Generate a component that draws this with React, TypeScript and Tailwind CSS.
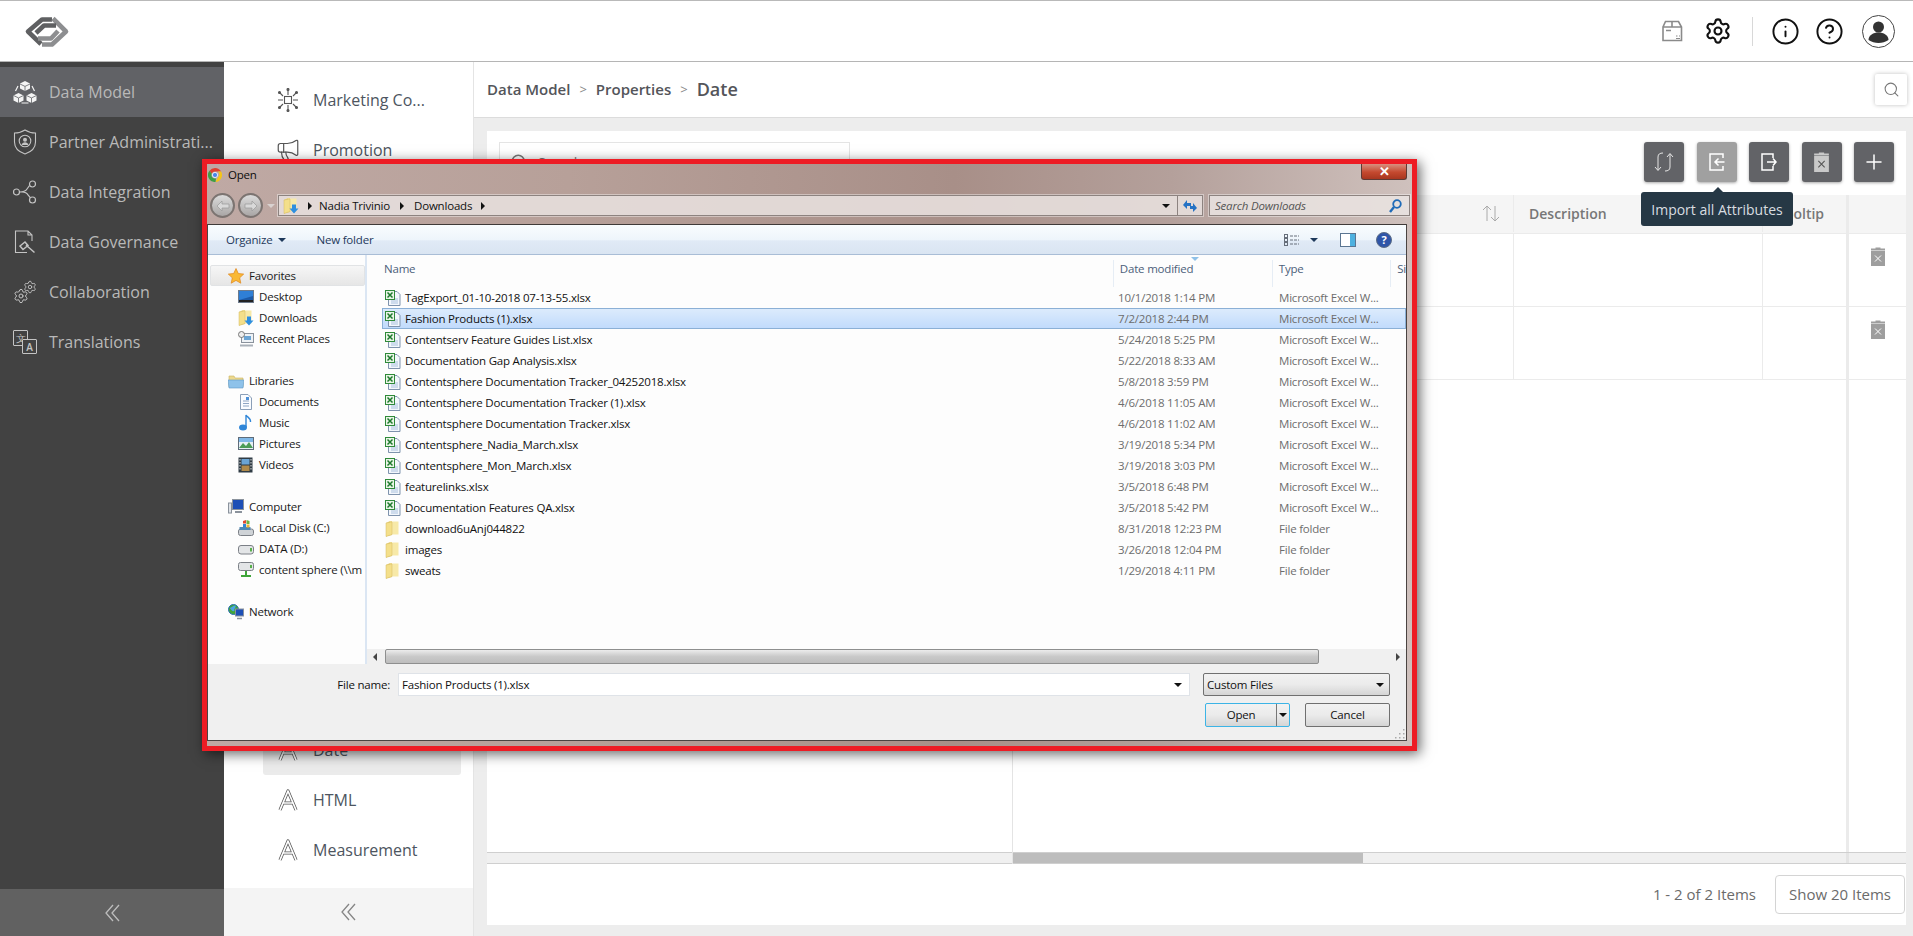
import { CircleHelp, Info, Megaphone, Plus, Search, Settings } from "lucide-react";
import type { ReactNode } from "react";

const navItems = ["Data Model", "Partner Administrati...", "Data Integration", "Data Governance", "Collaboration", "Translations"];

const files = [
  { name: "TagExport_01-10-2018 07-13-55.xlsx", date: "10/1/2018 1:14 PM" },
  { name: "Fashion Products (1).xlsx", date: "7/2/2018 2:44 PM", selected: true },
  { name: "Contentserv Feature Guides List.xlsx", date: "5/24/2018 5:25 PM" },
  { name: "Documentation Gap Analysis.xlsx", date: "5/22/2018 8:33 AM" },
  { name: "Contentsphere Documentation Tracker_04252018.xlsx", date: "5/8/2018 3:59 PM" },
  { name: "Contentsphere Documentation Tracker (1).xlsx", date: "4/6/2018 11:05 AM" },
  { name: "Contentsphere Documentation Tracker.xlsx", date: "4/6/2018 11:02 AM" },
  { name: "Contentsphere_Nadia_March.xlsx", date: "3/19/2018 5:34 PM" },
  { name: "Contentsphere_Mon_March.xlsx", date: "3/19/2018 3:03 PM" },
  { name: "featurelinks.xlsx", date: "3/5/2018 6:48 PM" },
  { name: "Documentation Features QA.xlsx", date: "3/5/2018 5:42 PM" },
  { name: "download6uAnj044822", date: "8/31/2018 12:23 PM", folder: true },
  { name: "images", date: "3/26/2018 12:04 PM", folder: true },
  { name: "sweats", date: "1/29/2018 4:11 PM", folder: true },
];

function Logo() {
  return (
    <svg width="46" height="32" viewBox="0 0 46 32" fill="none" strokeWidth="4.600" strokeLinejoin="round">
      <path d="M28 3.500H18L4 15.500 17 28" stroke="#5f6062" />
      <path d="M18 28.500H28L42 15.500 29 2.500" stroke="#8d8e90" />
      <path d="M12 17 20 9.500H32" stroke="#5f6062" />
      <path d="M14 22.500H27L34 15" stroke="#8d8e90" />
    </svg>
  );
}

function CollapseIcon({ color }: { color: string }) {
  return (
    <svg width="15" height="18" viewBox="0 0 15 18" fill="none" stroke={color} strokeWidth="1.300">
      <path d="M8 1 1 9l7 8M14 1 7 9l7 8" />
    </svg>
  );
}

function SideIcon({ index }: { index: number }) {
  const c = "#c4c4c4";
  if (index === 0) {
    return (
      <svg width="24" height="24" viewBox="0 0 24 24" fill="#f4f4f4">
        <path d="M12 1l5 2.400v5L12 11 7 8.400v-5z" />
        <path d="M5.500 13l5 2.400v5L5.500 23 .5 20.400v-5z" />
        <path d="M18.500 13l5 2.400v5l-5 2.600-5-2.600v-5z" />
        <path d="M7 4 12 6.400 17 4M12 6.400V11M.5 15.500l5 2.400 5-2.400M5.500 18v5M13.500 15.500l5 2.400 5-2.400M18.500 18v5" stroke="#616266" strokeWidth=".8" fill="none" />
        <path d="M5 6 2.500 11M19 6l2.500 5M8.500 23h7" stroke="#f4f4f4" strokeWidth="1.200" fill="none" />
      </svg>
    );
  }
  if (index === 1) {
    return (
      <svg width="24" height="26" viewBox="0 0 24 26" fill="none" stroke={c} strokeWidth="1.100">
        <path d="M12 1c3 2 6.500 3 10.500 3v9c0 6-4.500 10-10.500 12C6 23 1.500 19 1.500 13V4C5.500 4 9 3 12 1z" />
        <circle cx="12" cy="12" r="5.800" />
        <circle cx="12" cy="10.800" r="2" fill={c} stroke="none" />
        <path d="M8.500 16c.5-2 2-2.800 3.500-2.800s3 .8 3.500 2.800" fill={c} stroke="none" />
      </svg>
    );
  }
  if (index === 2) {
    return (
      <svg width="24" height="24" viewBox="0 0 24 24" fill="none" stroke={c} strokeWidth="1.200">
        <circle cx="3.500" cy="12" r="3" />
        <circle cx="19.500" cy="4" r="3" />
        <circle cx="19.500" cy="20" r="3" />
        <path d="M6.500 12c3.500 0 6-.5 7.500-3l2.500-3.500M9 12c3 0 5 1 6 3l2.500 2.800" />
      </svg>
    );
  }
  if (index === 3) {
    return (
      <svg width="24" height="24" viewBox="0 0 24 24" fill="none" stroke={c} strokeWidth="1.100">
        <path d="M14 22.500H2.500V1H15l4 4v6M15 1v4h4" />
        <path d="M7 16l5-4 3 3.500-5 4zM13 15l8.500 7.500" strokeWidth="1.500" />
      </svg>
    );
  }
  if (index === 4) {
    return (
      <span className="relative block h-[24px] w-[24px]">
        <Settings size={16} color={c} strokeWidth={1.500} className="absolute bottom-0 left-0" />
        <Settings size={14} color={c} strokeWidth={1.500} className="absolute top-0 right-0" />
      </span>
    );
  }
  return (
    <span className="relative block h-[24px] w-[24px] text-[10px] leading-[14px] text-[#c4c4c4]">
      <span className="absolute top-0 left-0 h-[16px] w-[15px] rounded-[1px] border border-[#c4c4c4] text-center">文</span>
      <span className="absolute right-0 bottom-0 h-[15px] w-[15px] rounded-[1px] border border-[#c4c4c4] bg-[#424242] text-center font-semibold">A</span>
    </span>
  );
}

function AttrIcon() {
  return (
    <svg width="20" height="22" viewBox="0 0 20 22" fill="none" strokeLinejoin="round">
      <path d="M2 21 10 2 18 21M5 14h10" stroke="#555" strokeWidth="3.200" />
      <path d="M2 21 10 2 18 21M5 14h10" stroke="#fff" strokeWidth="1.700" />
    </svg>
  );
}

function MarketingIcon() {
  return (
    <svg width="22" height="24" viewBox="0 0 22 24" fill="none" stroke="#555" strokeWidth="1.100">
      <rect x="7.500" y="8.500" width="7" height="7" />
      <path d="M11 2v5M11 17v5M1 12h5M16 12h5M3 5l3 3M19 5l-3 3M3 19l3-3M19 19l-3-3" />
      <circle cx="11" cy="1.500" r="1" fill="#555" />
      <circle cx="11" cy="22.500" r="1" fill="#555" />
      <circle cx="2.500" cy="4.500" r="1" fill="#555" />
      <circle cx="19.500" cy="4.500" r="1" fill="#555" />
      <circle cx="2.500" cy="19.500" r="1" fill="#555" />
      <circle cx="19.500" cy="19.500" r="1" fill="#555" />
    </svg>
  );
}

function ToolButton({ children, light }: { children: ReactNode; light?: boolean }) {
  return (
    <div className={`flex h-[40px] w-[40px] items-center justify-center rounded-[3px] shadow-[0_1px_3px_rgba(0,0,0,0.35)] ${light ? "bg-[#a0a0a0]" : "bg-[#626367]"}`}>
      {children}
    </div>
  );
}

function TrashIcon({ w, h, body, cross }: { w: number; h: number; body: string; cross: string }) {
  return (
    <svg width={w} height={h} viewBox="0 0 14 19">
      <path d="M4.500 1.500V.5h5v1H14V3H0V1.500z" fill={body} />
      <rect x="0" y="3.500" width="14" height="15.500" fill={body} />
      <path d="M4 8.500l6 6M10 8.500l-6 6" stroke={cross} strokeWidth="1" />
    </svg>
  );
}

function XlsxIcon() {
  return (
    <svg width="16" height="16" viewBox="0 0 16 16" className="shrink-0">
      <path d="M3.500 1.500H12l3 3v11H3.500z" fill="#f3f7fc" stroke="#7f93ad" />
      <path d="M6 9h7M6 11h7M6 13h7" stroke="#a9c0dc" strokeWidth="1" />
      <rect x="0.500" y="0.500" width="9" height="9" fill="#e9f5e6" stroke="#2f8a39" />
      <path d="M2.500 2.500l5 5M7.500 2.500l-5 5" stroke="#1e7a2d" strokeWidth="1.500" />
    </svg>
  );
}

function FolderIcon({ arrow }: { arrow?: boolean }) {
  return (
    <svg width="16" height="17" viewBox="0 0 16 17" className="shrink-0">
      <path d="M1 3l4-2h2v14l-6 1.500z" fill="#e8cf7a" />
      <path d="M5 1.500h8.500v13H5z" fill="#f7e9a8" />
      <path d="M1 3v13.500l6-2V2z" fill="#f4df8a" stroke="#d4bb63" strokeWidth=".5" />
      {arrow && <path d="M9 7.500h4v4h2.500L11 16.500 6.500 11.500H9z" fill="#2e8fe0" />}
    </svg>
  );
}

function Star() {
  return (
    <svg width="16" height="16" viewBox="0 0 16 16">
      <path d="M8 .5l2.300 5 5.400.6-4 3.700 1.100 5.400L8 12.400l-4.800 2.800 1.100-5.400-4-3.700 5.400-.6z" fill="#f9b935" stroke="#e0841a" strokeWidth=".7" />
    </svg>
  );
}

function PlaceIcon({ kind }: { kind: string }) {
  if (kind === "downloads") return <FolderIcon arrow />;
  if (kind === "music") {
    return (
      <svg width="16" height="17" viewBox="0 0 16 17">
        <ellipse cx="5" cy="13.500" rx="4" ry="3" fill="#2f86d8" />
        <path d="M8 13V1c1 2 5 3 4.500 7" fill="none" stroke="#2f86d8" strokeWidth="1.400" />
      </svg>
    );
  }
  if (kind === "docs") {
    return (
      <svg width="16" height="16" viewBox="0 0 16 16">
        <path d="M2.500.5H10l3.500 3.500v11.500h-11z" fill="#fafcff" stroke="#8b9fb8" />
        <path d="M5 7h6M5 9.500h6M5 12h6" stroke="#8fa6c4" />
        <rect x="8" y="3" width="3" height="3" fill="#4d8fd6" />
      </svg>
    );
  }
  if (kind === "videos") {
    return (
      <svg width="16" height="16" viewBox="0 0 16 16">
        <rect x="0.500" y="0.500" width="14" height="15" fill="#2f3b44" />
        <rect x="3.500" y="2" width="8" height="5.500" fill="#6aa4d4" />
        <rect x="3.500" y="8.500" width="8" height="5.500" fill="#b08a4a" />
        <path d="M2 2v12M13 2v12" stroke="#ddd" strokeWidth="1" strokeDasharray="1.500 1.500" />
      </svg>
    );
  }
  if (kind === "disk") {
    return (
      <svg width="16" height="12" viewBox="0 0 16 12">
        <rect x="0.500" y="2.500" width="15" height="8.500" rx="2.500" fill="#e3e5e7" stroke="#7c8087" />
        <rect x="12" y="5" width="2" height="3.500" fill="#58b04a" />
      </svg>
    );
  }
  if (kind === "net") {
    return (
      <svg width="16" height="16" viewBox="0 0 16 16">
        <rect x="0.500" y="0.500" width="15" height="8" rx="2" fill="#e3e5e7" stroke="#7c8087" />
        <rect x="12" y="3" width="2" height="3" fill="#58b04a" />
        <path d="M8 9v4M3 14h10" stroke="#3fa53a" strokeWidth="2" />
      </svg>
    );
  }
  if (kind === "desktop") {
    return (
      <svg width="16" height="13" viewBox="0 0 16 13">
        <rect x="0.500" y="0.500" width="15" height="12" fill="#1c5aa8" stroke="#6c7a8c" />
        <path d="M1 1h14v5L1 10z" fill="#2f7fd6" />
        <rect x="1" y="10" width="14" height="2" fill="#222" />
      </svg>
    );
  }
  if (kind === "recent") {
    return (
      <svg width="16" height="16" viewBox="0 0 16 16">
        <rect x="3.500" y="2.500" width="12" height="9" fill="#eef2f6" stroke="#8a929c" />
        <rect x="6" y="5" width="7" height="4" fill="#6aa4d4" />
        <circle cx="3.500" cy="3.500" r="3" fill="#eee" stroke="#777" />
        <path d="M2 14.500h13" stroke="#a9b0b8" strokeWidth="2" />
      </svg>
    );
  }
  if (kind === "libs") {
    return (
      <svg width="16" height="16" viewBox="0 0 16 16">
        <path d="M1 3h5l1 2h8v9H1z" fill="#edd98f" stroke="#c9b25e" strokeWidth=".6" />
        <path d="M0 7h16l-1 8H1z" fill="#8ec2ea" stroke="#5e98c7" strokeWidth=".6" />
      </svg>
    );
  }
  if (kind === "computer") {
    return (
      <svg width="16" height="16" viewBox="0 0 16 16">
        <rect x="4.500" y="0.500" width="11" height="10" fill="#1d4fb6" stroke="#8a929c" />
        <rect x="0.500" y="4" width="3" height="10" fill="#dfe3e8" stroke="#8a929c" />
        <path d="M7 13h7" stroke="#8a929c" strokeWidth="2" />
      </svg>
    );
  }
  if (kind === "cdisk") {
    return (
      <svg width="16" height="16" viewBox="0 0 16 16">
        <rect x="0.500" y="9" width="15" height="6.500" rx="2" fill="#cfd3d7" stroke="#7c8087" />
        <rect x="1.500" y="7" width="11" height="3" fill="#4d87b5" />
        <path d="M5 1l3-1v3.500H5z" fill="#e0492f" />
        <path d="M8.500 0l3 1v3h-3z" fill="#6db33f" />
        <path d="M5 4h3v3H5z" fill="#2f86d8" />
        <path d="M8.500 4.500h3v3h-3z" fill="#f2b632" />
      </svg>
    );
  }
  if (kind === "globe") {
    return (
      <svg width="16" height="16" viewBox="0 0 16 16">
        <circle cx="5.500" cy="5.500" r="5" fill="#3fa53a" stroke="#2c6fb5" />
        <path d="M1.500 3.500c2 1 3-2 6-2 1 2-2 3-1 5-1 2-3 0-5-3z" fill="#4aa3e6" />
        <rect x="7.500" y="5" width="8" height="7" fill="#1d4fb6" stroke="#8a929c" />
        <path d="M9 14.500h5" stroke="#8a929c" strokeWidth="1.500" />
      </svg>
    );
  }
  return (
    <svg width="16" height="13" viewBox="0 0 16 13">
      <rect x="0.500" y="0.500" width="15" height="12" fill="#e6f0f7" stroke="#5e6c7a" />
      <path d="M1 11l4-5 3 3 3-4 4 6z" fill="#4b9c57" />
      <rect x="1" y="1" width="14" height="4" fill="#7fb8e8" />
    </svg>
  );
}

function PlaceRow({ kind, label, head }: { kind: string; label: string; head?: boolean }) {
  return (
    <div className={`flex h-[21px] items-center whitespace-nowrap ${head ? "pl-[20px]" : "pl-[30px]"}`}>
      <span className="flex w-[16px] shrink-0 items-center justify-center"><PlaceIcon kind={kind} /></span>
      <span className="ml-[5px]">{label}</span>
    </div>
  );
}

function Caret({ className }: { className: string }) {
  return <span className={`inline-block h-0 w-0 border-x-[4px] border-t-[4px] border-x-transparent ${className}`} />;
}

function RightCaret() {
  return <span className="inline-block h-0 w-0 border-y-[4px] border-l-[4px] border-y-transparent border-l-[#111]" />;
}

function ChromeIcon() {
  return (
    <svg width="14" height="14" viewBox="0 0 14 14">
      <path d="M7 0a7 7 0 0 1 6.100 3.500H7a3.500 3.500 0 0 0-3.300 2.300L1.500 2.700A7 7 0 0 1 7 0z" fill="#e0422f" />
      <path d="M13.100 3.500A7 7 0 0 1 7.500 14l2.600-5A3.500 3.500 0 0 0 9.800 3.500z" fill="#f5c518" />
      <path d="M1.500 2.700l2.200 3.100A3.500 3.500 0 0 0 8 10.400L7.500 14A7 7 0 0 1 1.500 2.700z" fill="#3f9e45" />
      <circle cx="7" cy="7" r="2.600" fill="#4a86e8" stroke="#fff" strokeWidth=".8" />
    </svg>
  );
}

function NavCircle({ flip }: { flip?: boolean }) {
  return (
    <div className="flex h-[25px] w-[25px] items-center justify-center rounded-full border-2 border-[#7c7471] bg-[linear-gradient(180deg,#dcdcdc,#a9a6a5)]">
      <svg width="14" height="12" viewBox="0 0 14 12" className={flip ? "rotate-180" : ""}>
        <path d="M6 1 1 6l5 5V8h7V4H6z" fill="#d9d9d9" stroke="#9a9a9a" strokeWidth=".7" />
      </svg>
    </div>
  );
}

function OpenDialog() {
  return (
    <div className="absolute top-[159px] left-[202px] z-20 flex h-[592px] w-[1215px] flex-col border-[5px] border-[#ed1c24] bg-[linear-gradient(90deg,#bfa9a4_0%,#b7a099_30%,#a88f88_62%,#b4a09b_80%,#cfc1bd_100%)] text-[11.5px] tracking-[-0.2px] text-[#111] shadow-[3px_3px_12px_rgba(0,0,0,0.6)]">
      <div className="relative flex h-[26px] shrink-0 items-center pb-[5px] pl-[1px]">
        <ChromeIcon />
        <span className="ml-[6px] text-[#0c0c0c]">Open</span>
        <div className="absolute top-0 right-[5px] flex h-[16px] w-[46px] items-center justify-center rounded-b-[3px] border border-t-0 border-[#5d3a35] bg-[linear-gradient(180deg,#d88f7e,#c4492f_55%,#a8361f)]">
          <span className="text-[13px] leading-none font-bold text-white">✕</span>
        </div>
      </div>

      <div className="flex h-[34px] shrink-0 items-center pr-[2px] pb-[3px]">
        <div className="ml-[3px] flex gap-[3px]">
          <NavCircle />
          <NavCircle flip />
        </div>
        <Caret className="ml-[4px] border-t-[#d9d2d0]" />
        <div className="ml-[3px] flex h-[21px] flex-1 items-center border border-[#8d8380] bg-[#e7dfdd]/90 pl-[4px] shadow-[0_0_0_1px_rgba(255,255,255,0.4)]">
          <FolderIcon arrow />
          <span className="mr-[7px] ml-[9px]"><RightCaret /></span>
          <span>Nadia Trivinio</span>
          <span className="mx-[10px]"><RightCaret /></span>
          <span>Downloads</span>
          <span className="ml-[9px]"><RightCaret /></span>
          <Caret className="mr-[7px] ml-auto border-t-[#111]" />
          <div className="flex h-full w-[25px] items-center justify-center border-l border-[#8d8380]">
            <svg width="14" height="14" viewBox="0 0 14 14" fill="#2572c4">
              <path d="M0 6 4 1v3h4v3H4v3zM14 9l-4 4v-3H7V7h3V4z" />
            </svg>
          </div>
        </div>
        <div className="ml-[6px] flex h-[21px] w-[201px] items-center justify-between border border-[#8d8380] bg-[#e9e2e0]/90 pr-[7px] pl-[5px]  shadow-[0_0_0_1px_rgba(255,255,255,0.4)]">
          <span className="text-[#555] italic">Search Downloads</span>
          <svg width="13" height="14" viewBox="0 0 13 14" fill="none" stroke="#1f6bb8" strokeWidth="1.800">
            <circle cx="8" cy="5" r="3.800" />
            <path d="M5 8 1 13" strokeWidth="2.400" />
          </svg>
        </div>
      </div>

      <div className="mr-[5px] mb-[5px] flex min-h-0 flex-1 flex-col border-x border-b border-[#4a4442] border-t-[#37322f] bg-white">
        <div className="flex h-[31px] shrink-0 items-center border-t border-b border-t-[#3f3a38] border-b-[#a9bdd6] bg-[linear-gradient(180deg,#f9fcfe_0%,#eef5fb_50%,#e0eaf6_55%,#dae5f2_100%)] pl-[18px] text-[#1e395b]">
          <span>Organize</span>
          <Caret className="ml-[6px] border-t-[#1e395b]" />
          <span className="ml-[30px]">New folder</span>
          <div className="ml-auto flex items-center pr-[14px]">
            <svg width="15" height="12" viewBox="0 0 15 12" fill="none" stroke="#666e7a">
              <rect x="0.500" y="0.500" width="3" height="3" />
              <rect x="0.500" y="4.500" width="3" height="3" />
              <rect x="0.500" y="8.500" width="3" height="3" />
              <path d="M6 2h9M6 6h9M6 10h9" strokeDasharray="3 1" />
            </svg>
            <Caret className="ml-[11px] border-t-[#1e395b]" />
            <svg width="16" height="14" viewBox="0 0 16 14" className="ml-[22px]">
              <rect x="0.500" y="0.500" width="15" height="13" fill="#fff" stroke="#5b7591" />
              <rect x="10" y="1" width="5" height="12" fill="#4eb1e0" />
            </svg>
            <span className="ml-[20px] flex h-[16px] w-[16px] items-center justify-center rounded-full border border-[#5c6d86] bg-[#2f55a8] text-[11px] leading-none font-bold text-white">?</span>
          </div>
        </div>

        <div className="flex min-h-0 flex-1">
          <div className="w-[157px] shrink-0 overflow-hidden bg-[#fdfdfd] pt-[10px] text-[#1a1a1a]">
            <div className="ml-[2px] flex h-[21px] items-center rounded-[2px] border border-[#e1e3e5] bg-[linear-gradient(180deg,#f6f6f6,#e6e6e6)] pl-[17px]">
              <Star />
              <span className="ml-[5px]">Favorites</span>
            </div>
            <PlaceRow kind="desktop" label="Desktop" />
            <PlaceRow kind="downloads" label="Downloads" />
            <PlaceRow kind="recent" label="Recent Places" />
            <div className="h-[21px]" />
            <PlaceRow head kind="libs" label="Libraries" />
            <PlaceRow kind="docs" label="Documents" />
            <PlaceRow kind="music" label="Music" />
            <PlaceRow kind="pictures" label="Pictures" />
            <PlaceRow kind="videos" label="Videos" />
            <div className="h-[21px]" />
            <PlaceRow head kind="computer" label="Computer" />
            <PlaceRow kind="cdisk" label="Local Disk (C:)" />
            <PlaceRow kind="disk" label="DATA (D:)" />
            <PlaceRow kind="net" label="content sphere (\\m" />
            <div className="h-[21px]" />
            <PlaceRow head kind="globe" label="Network" />
          </div>

          <div className="flex min-w-0 flex-1 flex-col border-l-2 border-[#dbe6f3] bg-[#fdfdfd]">
            <div className="relative flex h-[32px] shrink-0 overflow-hidden pt-[5px] text-[#4c607a]">
              <span className="ml-[17px] w-[739px]">Name</span>
              <span className="w-[161px] border-l border-[#e6edf5] pl-[6px]">Date modified</span>
              <span className="w-[120px] border-l border-[#e6edf5] pl-[6px]">Type</span>
              <span className="border-l border-[#e6edf5] pl-[6px]">Si</span>
              <span className="absolute top-[2px] left-[824px] h-0 w-0 border-x-[4px] border-t-[4px] border-x-transparent border-t-[#8fc1e8]" />
            </div>
            <div className="min-h-0 flex-1">
              {files.map((file) => (
                <div
                  key={file.name}
                  className={`ml-[15px] flex h-[21px] items-center whitespace-nowrap ${file.selected ? "border-y border-[#8bb0d6] bg-[linear-gradient(180deg,#dcebfc,#c1dbfc)] outline-1 -outline-offset-1 outline-[#8bb0d6]" : ""}`}
                >
                  <span className="ml-[3px] flex w-[16px] shrink-0 justify-center">{file.folder ? <FolderIcon /> : <XlsxIcon />}</span>
                  <span className="ml-[4px] w-[713px] shrink-0 text-[#111]">{file.name}</span>
                  <span className="w-[161px] shrink-0 text-[#6d6d6d]">{file.date}</span>
                  <span className="text-[#6d6d6d]">{file.folder ? "File folder" : "Microsoft Excel W..."}</span>
                </div>
              ))}
            </div>
            <div className="flex h-[15px] shrink-0 items-center bg-[#f0f0f0]">
              <span className="ml-[6px] h-0 w-0 border-y-[4px] border-r-[4px] border-y-transparent border-r-[#444]" />
              <div className="ml-[8px] h-full w-[934px] rounded-[2px] border border-[#8e8f8f] bg-[linear-gradient(180deg,#ececec,#c9c9c9_50%,#bdbdbd)]" />
              <span className="mr-[6px] ml-auto h-0 w-0 border-y-[4px] border-l-[4px] border-y-transparent border-l-[#444]" />
            </div>
          </div>
        </div>

        <div className="relative h-[76px] shrink-0 bg-[#f0f0f0]">
          <div className="flex items-center pt-[9px]">
            <span className="w-[182px] text-right">File name:</span>
            <div className="ml-[8px] flex h-[23px] w-[792px] items-center justify-between border border-[#dfe3e8] bg-white pr-[7px] pl-[3px]">
              <span>Fashion Products (1).xlsx</span>
              <Caret className="border-t-[#111]" />
            </div>
            <div className="ml-[13px] flex h-[23px] w-[187px] items-center justify-between rounded-[2px] border border-[#707070] bg-[linear-gradient(180deg,#f2f2f2,#ebebeb_50%,#d5d5d5)] pr-[5px] pl-[3px]">
              <span>Custom Files</span>
              <Caret className="border-t-[#111]" />
            </div>
          </div>
          <div className="mt-[7px] flex items-center">
            <div className="ml-[997px] flex h-[24px] w-[85px] items-center rounded-[2px] border border-[#3cb4e6] bg-[linear-gradient(180deg,#f2f2f2,#ebebeb_50%,#d5d5d5)]">
              <span className="flex-1 text-center">Open</span>
              <span className="flex h-full w-[13px] items-center justify-center border-l border-[#777]">
                <Caret className="border-t-[#111]" />
              </span>
            </div>
            <div className="ml-[15px] flex h-[24px] w-[85px] items-center justify-center rounded-[2px] border border-[#707070] bg-[linear-gradient(180deg,#f2f2f2,#ebebeb_50%,#d5d5d5)]">Cancel</div>
          </div>
          <svg width="10" height="10" viewBox="0 0 10 10" fill="#a9a9a9" className="absolute right-[1px] bottom-[1px]">
            <rect x="8" y="0" width="1.500" height="1.500" />
            <rect x="8" y="4" width="1.500" height="1.500" />
            <rect x="4" y="4" width="1.500" height="1.500" />
            <rect x="8" y="8" width="1.500" height="1.500" />
            <rect x="4" y="8" width="1.500" height="1.500" />
            <rect x="0" y="8" width="1.500" height="1.500" />
          </svg>
        </div>
      </div>
    </div>
  );
}

export default function App() {
  return (
    <div className="relative flex h-[936px] w-[1913px] flex-col overflow-hidden bg-[#ededed] font-['Open_Sans',sans-serif]">
      <header className="flex h-[62px] shrink-0 items-center border-y border-t-[#b9b9b9] border-b-[#b5b5b5] bg-white">
        <div className="mt-[1px] ml-[24px]"><Logo /></div>
        <div className="ml-auto flex items-center">
          <svg width="22" height="22" viewBox="0 0 22 22" fill="none" stroke="#8a8a8a" strokeWidth="1.600">
            <path d="M2 7V20.500H20.500V7L17.500 1.500H4.500ZM2 7H20.500M11 1.500V7M5 10.500h5" />
            <path d="M15 16h1.500M18 16h1M15 18.500h4" strokeWidth="1.200" />
          </svg>
          <Settings size={28} color="#111" strokeWidth={1.800} className="ml-[21px]" />
          <div className="ml-[20px] h-[29px] w-px bg-[#d8d8d8]" />
          <Info size={29} color="#111" strokeWidth={1.600} className="ml-[18px]" />
          <CircleHelp size={29} color="#111" strokeWidth={1.600} className="ml-[15px]" />
          <div className="mr-[18px] ml-[18px] h-[33px] w-[33px]">
            <svg width="33" height="33" viewBox="0 0 33 33">
              <circle cx="16.500" cy="16.500" r="16" fill="#fff" stroke="#444" />
              <circle cx="16.500" cy="12" r="5.500" fill="#333" />
              <path d="M6.500 25c0-5 5-7.500 10-7.500s10 2.500 10 7.500c-3 2-6.500 3-10 3s-7-1-10-3z" fill="#333" />
            </svg>
          </div>
        </div>
      </header>

      <div className="flex min-h-0 flex-1">
        <aside className="flex w-[224px] shrink-0 flex-col bg-[#424242] pt-[5px]">
          <nav className="flex-1">
            {navItems.map((item, index) => (
              <div key={item} className={`flex h-[50px] items-center pl-[13px] text-[16px] text-[#b9b9b9] ${index === 0 ? "bg-[#616266]" : ""}`}>
                <span className="flex w-[24px] justify-center"><SideIcon index={index} /></span>
                <span className="ml-[12px] whitespace-nowrap">{item}</span>
              </div>
            ))}
          </nav>
          <div className="flex h-[47px] items-center justify-center bg-[#616161]">
            <CollapseIcon color="#bdbdbd" />
          </div>
        </aside>

        <div className="flex w-[249px] shrink-0 flex-col bg-white text-[16px] text-[#4d5560]">
          <div className="pt-[13px]">
            <div className="flex h-[50px] items-center pl-[53px]">
              <span className="flex w-[22px] justify-center"><MarketingIcon /></span>
              <span className="ml-[14px]">Marketing Co...</span>
            </div>
            <div className="flex h-[50px] items-center pl-[51px]">
              <Megaphone size={26} color="#555" strokeWidth={1.100} />
              <span className="ml-[12px]">Promotion</span>
            </div>
          </div>
          <div className="flex-1" />
          <div className="mr-[12px] ml-[39px] flex h-[50px] items-center rounded-[3px] bg-[#ebebeb] pl-[15px]">
            <AttrIcon />
            <span className="ml-[15px]">Date</span>
          </div>
          <div className="ml-[39px] flex h-[50px] items-center pl-[15px]">
            <AttrIcon />
            <span className="ml-[15px]">HTML</span>
          </div>
          <div className="mb-[13px] ml-[39px] flex h-[50px] items-center pl-[15px]">
            <AttrIcon />
            <span className="ml-[15px]">Measurement</span>
          </div>
          <div className="flex h-[48px] items-center justify-center bg-[#f4f4f4]">
            <CollapseIcon color="#858585" />
          </div>
        </div>

        <main className="flex min-w-0 flex-1 flex-col border-l border-[#e4e4e4]">
          <div className="flex h-[56px] shrink-0 items-center border-b border-[#dcdcdc] bg-white pl-[13px] text-[#54555a]">
            <span className="text-[15px] font-semibold">Data Model</span>
            <span className="mx-[9px] text-[13px] text-[#888]">&gt;</span>
            <span className="text-[15px] font-semibold">Properties</span>
            <span className="mx-[9px] text-[13px] text-[#888]">&gt;</span>
            <span className="text-[18px] font-semibold">Date</span>
            <div className="mr-[6px] ml-auto flex h-[31px] w-[32px] items-center justify-center rounded-[2px] bg-white shadow-[0_0_4px_rgba(0,0,0,0.25)]">
              <Search size={17} color="#777" strokeWidth={1.500} />
            </div>
          </div>

          <div className="mt-[13px] mr-[7px] mb-[11px] ml-[13px] flex min-h-0 flex-1 flex-col bg-white">
            <div className="flex h-[64px] shrink-0 items-start pt-[11px] pl-[12px]">
              <div className="flex h-[40px] w-[351px] items-center border border-[#e4e4e4] pl-[10px] text-[14px] text-[#777]">
                <Search size={18} color="#777" />
                <span className="ml-[10px]">Search</span>
              </div>
              <div className="mr-[12px] ml-auto flex gap-[12.500px]">
                <ToolButton>
                  <svg width="20" height="20" viewBox="0 0 20 20" fill="none" stroke="#e6e6e6" strokeWidth="1">
                    <path d="M4 18V5c0-3 2-4 5-4M1 15l3 3.500L7 15M16 2v13c0 3-2 4-5 4M13 5l3-3.500L19 5" />
                  </svg>
                </ToolButton>
                <ToolButton light>
                  <svg width="16" height="18" viewBox="0 0 16 18" fill="none" stroke="#fff" strokeWidth="1.500">
                    <path d="M14 5V1H1v16h13v-4M15.500 9H6M9.500 5.500 6 9l3.500 3.500" />
                  </svg>
                </ToolButton>
                <ToolButton>
                  <svg width="16" height="18" viewBox="0 0 16 18" fill="none" stroke="#fff" strokeWidth="1.500">
                    <path d="M12 5V1H1v16h11v-4M6 9h9M12 5.500 15 9l-3 3.500" />
                  </svg>
                </ToolButton>
                <ToolButton><TrashIcon w={15} h={20} body="#c9c9c9" cross="#555" /></ToolButton>
                <ToolButton><Plus size={24} color="#fff" strokeWidth={1.500} /></ToolButton>
              </div>
            </div>

            <div className="flex min-h-0 flex-1">
              <div className="flex w-[526px] shrink-0 flex-col border-r border-[#e4e4e4]">
                <div className="h-[39px] bg-[#f5f5f5]" />
                <div className="flex-1" />
                <div className="h-[12px] border-y border-[#cfcfcf] bg-[#f0f0f0]" />
              </div>
              <div className="flex min-w-0 flex-1 flex-col">
                <div className="flex min-h-0 flex-1">
                  <div className="flex min-w-0 flex-1 flex-col">
                    <div className="flex h-[39px] items-center border-b border-[#ebebeb] bg-[#f5f5f5] pb-[1px] text-[14px] font-semibold text-[#777]">
                      <div className="flex h-full w-[500px] items-center justify-end pr-[13px]">
                        <svg width="18" height="17" viewBox="0 0 18 17" fill="none" stroke="#aaa" strokeWidth="1">
                          <path d="M5 16V1M1 5l4-4 4 4M13 1v15M9 12l4 4 4-4" />
                        </svg>
                      </div>
                      <div className="flex h-full w-[249px] items-center border-l border-[#ebebeb] pl-[15px]">Description</div>
                      <div className="flex h-full flex-1 items-center border-l border-[#ebebeb] pl-[14px]">Tooltip</div>
                    </div>
                    {[0, 1].map((row) => (
                      <div key={row} className="flex h-[73px] border-b border-[#ebebeb]">
                        <div className="w-[500px]" />
                        <div className="w-[249px] border-l border-[#ebebeb]" />
                        <div className="flex-1 border-l border-[#ebebeb]" />
                      </div>
                    ))}
                  </div>
                  <div className="flex w-[60px] shrink-0 flex-col border-l-[3px] border-[#ebebeb]">
                    <div className="h-[39px] border-b border-[#ebebeb] bg-[#f5f5f5]" />
                    {[0, 1].map((row) => (
                      <div key={row} className="flex h-[73px] items-start justify-center border-b border-[#ebebeb] pt-[13px]">
                        <TrashIcon w={14} h={19} body="#9e9e9e" cross="#fff" />
                      </div>
                    ))}
                  </div>
                </div>
                <div className="flex h-[12px] shrink-0 border-y border-[#cfcfcf] bg-[#f0f0f0]">
                  <div className="h-full w-[350px] bg-[#bdbdbd]" />
                  <div className="ml-auto h-full w-[60px] border-l-[3px] border-[#e4e4e4]" />
                </div>
              </div>
            </div>

            <div className="flex h-[61px] shrink-0 items-center justify-end pr-[1px] text-[15px] text-[#6b6b6b]">
              <span className="font-medium">1 - 2 of 2 Items</span>
              <div className="ml-[19px] flex h-[39px] w-[130px] items-center justify-center rounded-[4px] border border-[#d4d4d4] font-medium">Show 20 Items</div>
            </div>
          </div>
        </main>
      </div>

      <OpenDialog />

      <div className="absolute top-[192px] left-[1641px] z-30 flex h-[34px] w-[152px] items-center justify-center rounded-[3px] bg-[#263845] text-[14px] font-medium text-[#d8dde0]">
        <span className="absolute -top-[5px] left-[71px] h-0 w-0 border-x-[6px] border-b-[6px] border-x-transparent border-b-[#263845]" />
        Import all Attributes
      </div>
    </div>
  );
}
